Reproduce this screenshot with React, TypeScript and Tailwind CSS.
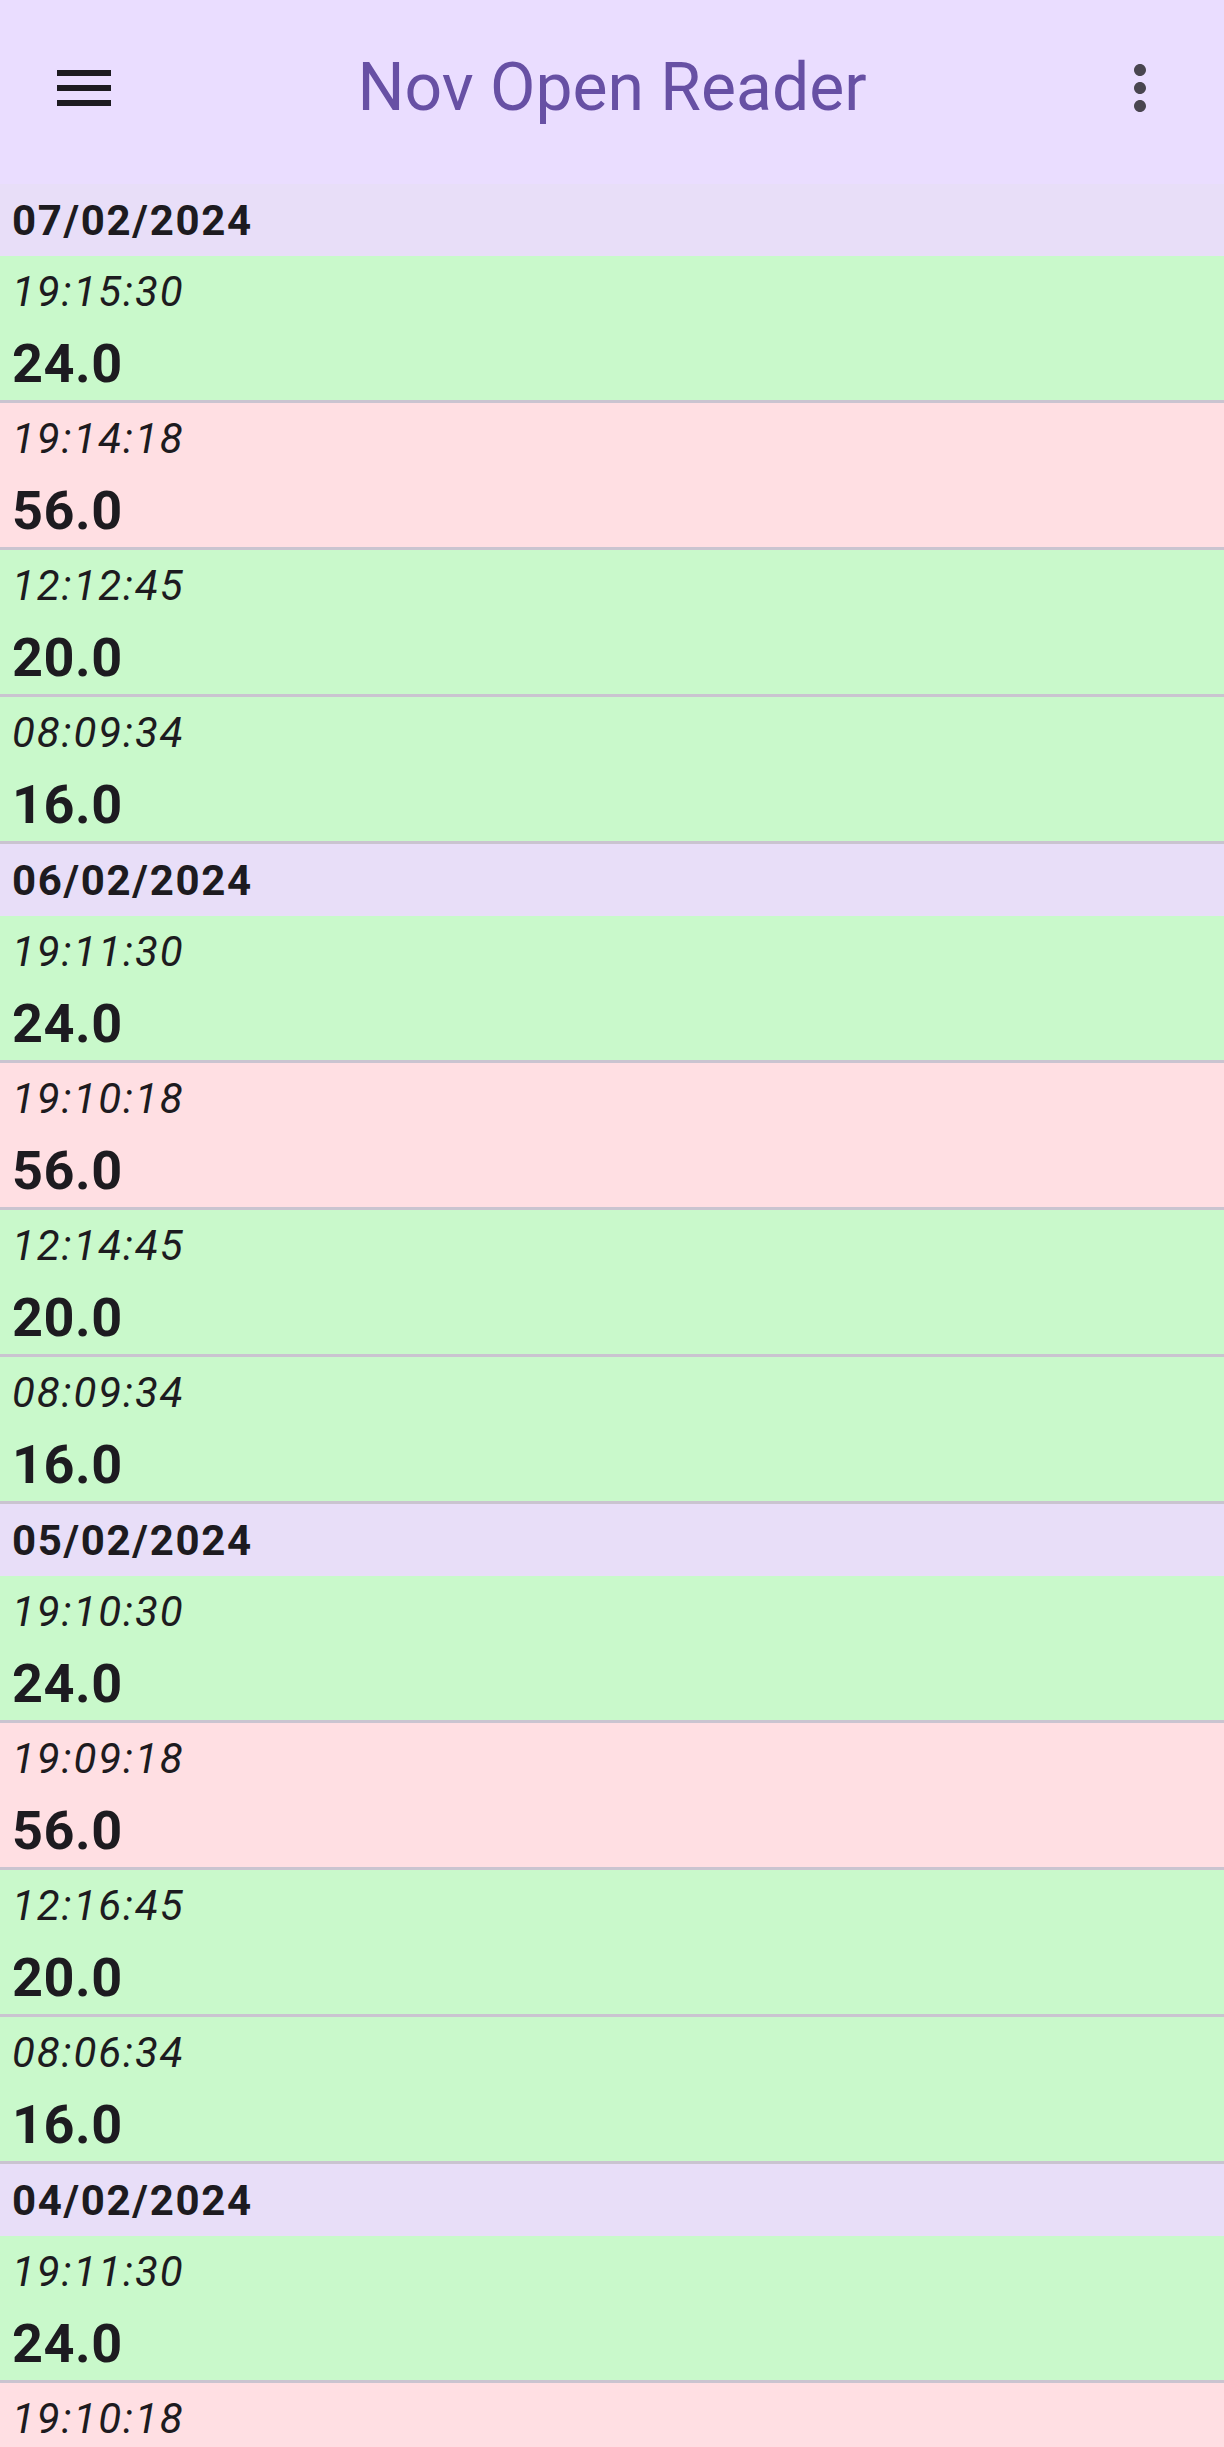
import React from "react";

type Reading = { time: string; value: string; high?: boolean };
type Day = { date: string; readings: Reading[] };

const days: Day[] = [
  {
    date: "07/02/2024",
    readings: [
      { time: "19:15:30", value: "24.0" },
      { time: "19:14:18", value: "56.0", high: true },
      { time: "12:12:45", value: "20.0" },
      { time: "08:09:34", value: "16.0" },
    ],
  },
  {
    date: "06/02/2024",
    readings: [
      { time: "19:11:30", value: "24.0" },
      { time: "19:10:18", value: "56.0", high: true },
      { time: "12:14:45", value: "20.0" },
      { time: "08:09:34", value: "16.0" },
    ],
  },
  {
    date: "05/02/2024",
    readings: [
      { time: "19:10:30", value: "24.0" },
      { time: "19:09:18", value: "56.0", high: true },
      { time: "12:16:45", value: "20.0" },
      { time: "08:06:34", value: "16.0" },
    ],
  },
  {
    date: "04/02/2024",
    readings: [
      { time: "19:11:30", value: "24.0" },
      { time: "19:10:18", value: "56.0", high: true },
    ],
  },
];

function MenuIcon() {
  return (
    <svg viewBox="0 0 24 24" className="w-[72px] h-[72px]" fill="#1D1B20">
      <path d="M3 18h18v-2H3v2zm0-5h18v-2H3v2zm0-7v2h18V6H3z" />
    </svg>
  );
}

function MoreIcon() {
  return (
    <svg viewBox="0 0 24 24" className="w-[72px] h-[72px]" fill="#49454F">
      <path d="M12 8c1.1 0 2-.9 2-2s-.9-2-2-2-2 .9-2 2 .9 2 2 2zm0 2c-1.1 0-2 .9-2 2s.9 2 2 2 2-.9 2-2-.9-2-2-2zm0 6c-1.1 0-2 .9-2 2s.9 2 2 2 2-.9 2-2-.9-2-2-2z" />
    </svg>
  );
}

export default function App() {
  return (
    <div className="w-[1224px] h-[2447px] overflow-hidden bg-[#FEF7FF] font-['Roboto',sans-serif] text-[#1D1B20]">
      {/* Top app bar */}
      <div className="h-[184px] bg-[#EADDFF] flex items-start pt-[52px] px-[48px] justify-between">
        <MenuIcon />
        <div className="text-[66px] leading-[72px] text-[#6750A4] font-normal">Nov Open Reader</div>
        <MoreIcon />
      </div>

      {/* Readings list, grouped by day */}
      {days.map((day) => (
        <div key={day.date}>
          <div className="h-[72px] bg-[#E8DEF8] px-[12px] pt-[12px] text-[42px] leading-[49px] font-bold tracking-[0.04em]">
            {day.date}
          </div>
          {day.readings.map((r, i) => (
            <div
              key={i}
              className={`h-[147px] border-b-[3px] border-[#CAC4D0] px-[12px] pt-[11px] ${
                r.high ? "bg-[#FFDFE3]" : "bg-[#C9F9CB]"
              }`}
            >
              <div className="text-[42px] leading-[49px] italic tracking-[0.045em]">{r.time}</div>
              <div className="mt-[16px] text-[54px] leading-[63px] font-bold tracking-[0.01em]">{r.value}</div>
            </div>
          ))}
        </div>
      ))}
    </div>
  );
}
